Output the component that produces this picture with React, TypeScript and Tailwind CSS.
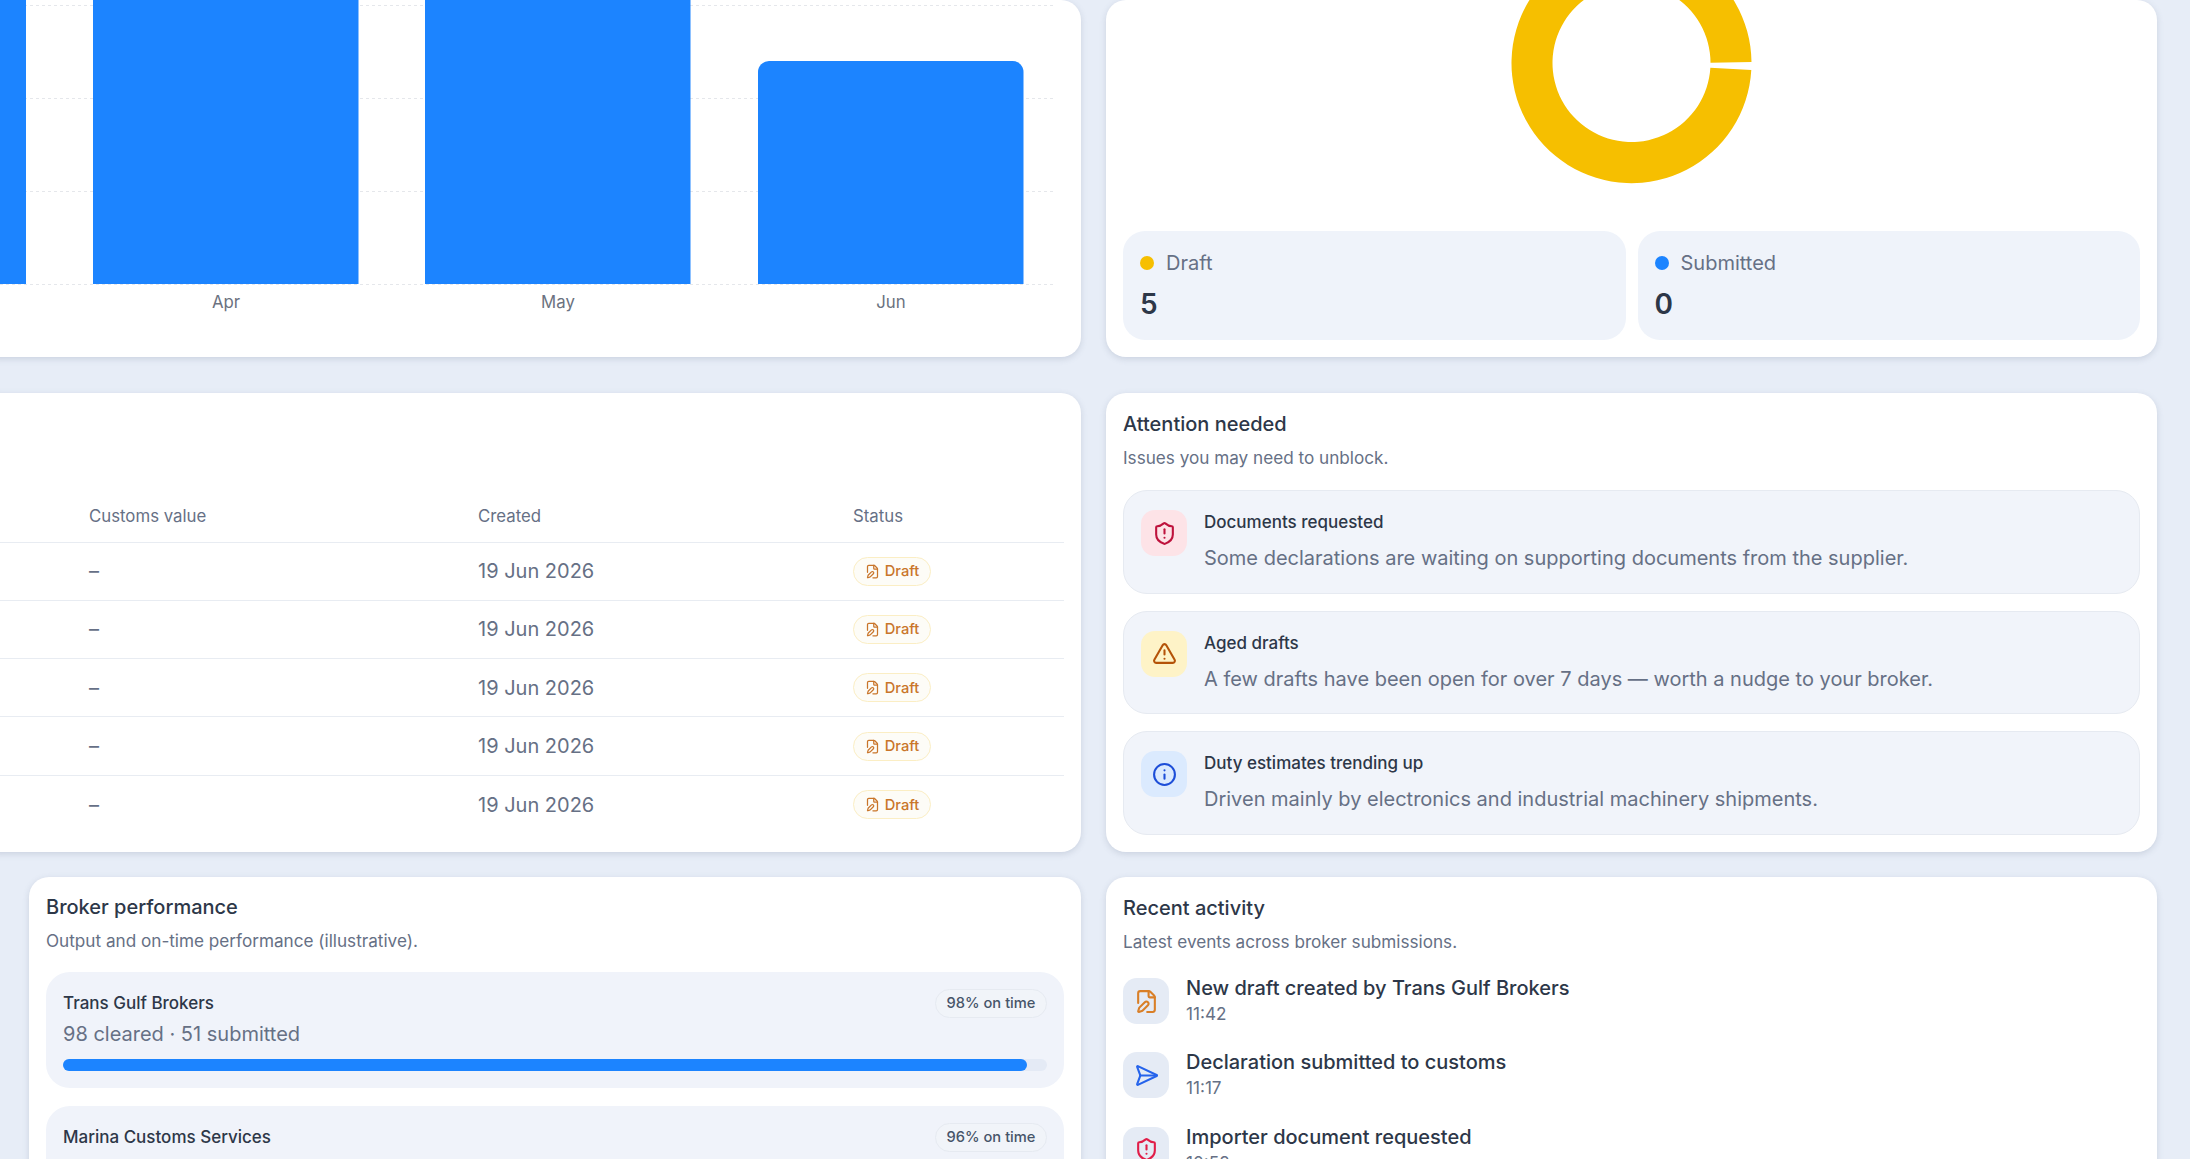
import { FilePen, Info, SendHorizontal, ShieldAlert, TriangleAlert } from "lucide-react";

const months = [
  { label: "Apr", x: 93, top: 0 },
  { label: "May", x: 425, top: 0 },
  { label: "Jun", x: 758, top: 61 },
];

const attentionItems = [
  {
    title: "Documents requested",
    body: "Some declarations are waiting on supporting documents from the supplier.",
    icon: ShieldAlert,
    tile: "bg-[#fde3e7]",
    tone: "text-[#be123c]",
  },
  {
    title: "Aged drafts",
    body: "A few drafts have been open for over 7 days — worth a nudge to your broker.",
    icon: TriangleAlert,
    tile: "bg-[#fef3c7]",
    tone: "text-[#b45309]",
  },
  {
    title: "Duty estimates trending up",
    body: "Driven mainly by electronics and industrial machinery shipments.",
    icon: Info,
    tile: "bg-[#dbeafe]",
    tone: "text-[#1d4ed8]",
  },
];

const activity = [
  { title: "New draft created by Trans Gulf Brokers", time: "11:42", icon: FilePen, tone: "text-[#d97f27]" },
  { title: "Declaration submitted to customs", time: "11:17", icon: SendHorizontal, tone: "text-[#2563eb]" },
  { title: "Importer document requested", time: "10:52", icon: ShieldAlert, tone: "text-[#e11d48]" },
];

const brokers = [
  { name: "Trans Gulf Brokers", stats: "98 cleared · 51 submitted", onTime: 98 },
  { name: "Marina Customs Services", stats: "84 cleared · 42 submitted", onTime: 96 },
];

const cardClass = "rounded-[20px] bg-white shadow-[0_2px_6px_rgba(100,116,139,0.22)]";

function CardHeading({ title, sub }: { title: string; sub: string }) {
  return (
    <>
      <h2 className="text-[20px] leading-[28px] font-medium text-[#2d3748]">{title}</h2>
      <p className="mt-[8px] text-[17.15px] leading-[24px] text-[#667085]">{sub}</p>
    </>
  );
}

function BarChart() {
  return (
    <svg width="1053" height="314" viewBox="0 0 1053 314" className="block">
      {[5.5, 98.5, 191.5, 284.5].map((y) => (
        <line key={y} x1="0" x2="1053" y1={y} y2={y} stroke="#e5e7eb" strokeWidth="1" strokeDasharray="3 3" />
      ))}
      <rect x="-240" y="-20" width="266" height="304" fill="#1c84ff" />
      {months.map((m) => (
        <g key={m.label}>
          {m.top === 0 ? (
            <rect x={m.x} y="-20" width="265.5" height="304" fill="#1c84ff" />
          ) : (
            <path
              d={`M${m.x} 284V${m.top + 11}a11 11 0 0 1 11 -11H${m.x + 254.5}a11 11 0 0 1 11 11V284Z`}
              fill="#1c84ff"
            />
          )}
          <text
            x={m.x + 133}
            y="307.5"
            textAnchor="middle"
            fontSize="16.8"
            fill="#6b7280"
            fontFamily="Inter, sans-serif"
          >
            {m.label}
          </text>
        </g>
      ))}
    </svg>
  );
}

function StatTile({ dot, label, value }: { dot: string; label: string; value: string }) {
  return (
    <div className="h-[109px] rounded-[22px] bg-[#eff3fa] px-[17px] pt-[19px]">
      <div className="flex items-center gap-[12px] text-[20px] leading-[26px] text-[#667085]">
        <span className={`h-[14px] w-[14px] rounded-full ${dot}`} />
        {label}
      </div>
      <div className="mt-[10px] text-[28px] leading-[36px] font-semibold text-[#2d3748]">{value}</div>
    </div>
  );
}

function TableSection() {
  const rows = [0, 1, 2, 3, 4];
  return (
    <div className={`${cardClass} -ml-5 flex h-[459px] flex-col justify-end pb-[18px]`}>
      <div className="mr-[17px]">
        <div className="grid h-[50px] grid-cols-[389px_375px_1fr] items-center border-b border-[#e8ecf2] pl-[109px] text-[16.8px] text-[#667085]">
          <span>Customs value</span>
          <span>Created</span>
          <span>Status</span>
        </div>
        {rows.map((row) => (
          <div
            key={row}
            className={`grid h-[58.3px] grid-cols-[389px_375px_1fr] items-center pl-[109px] text-[20px] text-[#667085] ${
              row < 4 ? "border-b border-[#e8ecf2]" : ""
            }`}
          >
            <span>–</span>
            <span>19 Jun 2026</span>
            <span className="inline-flex h-[29px] w-[78px] items-center justify-center gap-[5px] rounded-full border border-[#fbeec4] bg-[#fdfcf7] text-[14.7px] font-medium text-[#c9752a]">
              <FilePen size={15} strokeWidth={2} />
              Draft
            </span>
          </div>
        ))}
      </div>
    </div>
  );
}

export default function App() {
  return (
    <div className="h-[1159px] w-[2190px] overflow-hidden bg-[#e7edf7] font-['Inter',sans-serif]">
      <div className="grid grid-cols-[1081px_1051px] gap-x-[25px]">
        {/* chart row, scrolled so only the lower part shows */}
        <div className={`${cardClass} -ml-5 flex h-[357px] flex-col overflow-hidden pl-5`}>
          <BarChart />
        </div>
        <div className={`${cardClass} flex h-[357px] flex-col overflow-hidden px-[17px]`}>
          <svg width="242" height="184" viewBox="-121 -63 242 184" className="mx-auto block -translate-x-[0.5px]">
            <path
              d="M119.99 -1A120 120 0 1 0 119.8 7L78.86 4.7A79 79 0 1 1 79 -0.3Z"
              fill="#f6bf00"
            />
          </svg>
          <div className="mt-[47px] grid grid-cols-2 gap-[12px]">
            <StatTile dot="bg-[#f6bf00]" label="Draft" value="5" />
            <StatTile dot="bg-[#1c84ff]" label="Submitted" value="0" />
          </div>
        </div>
      </div>

      <div className="mt-[36px] grid grid-cols-[1081px_1051px] gap-x-[25px]">
        <TableSection />
        <div className={`${cardClass} h-[459px] px-[17px] pt-[17px]`}>
          <CardHeading title="Attention needed" sub="Issues you may need to unblock." />
          <div className="mt-[20px] flex flex-col gap-[17px]">
            {attentionItems.map((item) => (
              <div
                key={item.title}
                className="flex h-[103.7px] gap-[17px] rounded-[24px] border border-[#e6eaf1] bg-[#f1f4fa] pt-[19px] pl-[17px]"
              >
                <div className={`flex h-[46px] w-[46px] items-center justify-center rounded-[14px] ${item.tile}`}>
                  <item.icon size={25} strokeWidth={2} className={item.tone} />
                </div>
                <div>
                  <p className="text-[17px] leading-[24px] font-medium text-[#2d3748]">{item.title}</p>
                  <p className="mt-[10px] text-[20px] leading-[28px] text-[#667085]">{item.body}</p>
                </div>
              </div>
            ))}
          </div>
        </div>
      </div>

      <div className="mt-[25px] grid grid-cols-[1052px_1051px] gap-x-[25px] pl-[29px]">
        <div className={`${cardClass} h-[320px] px-[17px] pt-[16px]`}>
          <CardHeading title="Broker performance" sub="Output and on-time performance (illustrative)." />
          <div className="mt-[19px] flex flex-col gap-[18px]">
            {brokers.map((broker) => (
              <div key={broker.name} className="h-[116px] rounded-[24px] bg-[#f0f3fa] px-[17px] pt-[17px]">
                <div className="flex items-center justify-between">
                  <span className="text-[17px] font-medium text-[#2d3748]">{broker.name}</span>
                  <span className="rounded-full border border-[#e6eaf1] bg-[#f1f4f9] px-[10.5px] text-[14.7px] leading-[27px] font-medium text-[#475569]">
                    {broker.onTime}% on time
                  </span>
                </div>
                <p className="mt-[2px] text-[20px] leading-[28px] text-[#667085]">{broker.stats}</p>
                <div className="mt-[11px] h-[12px] rounded-full bg-[#e4eaf5]">
                  <div className="h-full rounded-full bg-[#1c84ff]" style={{ width: `${broker.onTime}%` }} />
                </div>
              </div>
            ))}
          </div>
        </div>
        <div className={`${cardClass} h-[320px] px-[17px] pt-[17px]`}>
          <CardHeading title="Recent activity" sub="Latest events across broker submissions." />
          <div className="mt-[24px] flex flex-col gap-[26.4px]">
            {activity.map((event) => (
              <div key={event.title} className="flex gap-[17px]">
                <div className="flex h-[46px] w-[46px] shrink-0 items-center justify-center rounded-[14px] bg-[#e5ebf5]">
                  <event.icon size={25} strokeWidth={2} className={event.tone} />
                </div>
                <div className="-mt-[4px]">
                  <p className="text-[20px] leading-[28px] font-medium text-[#2d3748]">{event.title}</p>
                  <p className="text-[17.15px] leading-[24px] text-[#667085]">{event.time}</p>
                </div>
              </div>
            ))}
          </div>
        </div>
      </div>
    </div>
  );
}
